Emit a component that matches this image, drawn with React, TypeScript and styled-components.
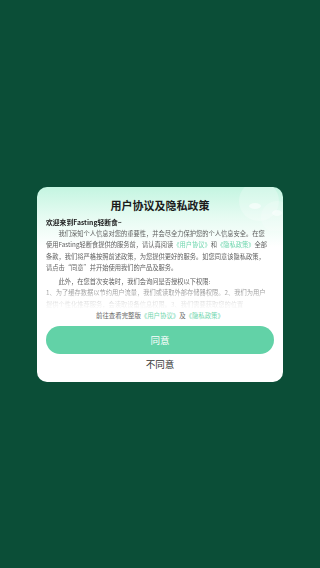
import styled, { createGlobalStyle } from "styled-components";

const GlobalStyle = createGlobalStyle`
  html, body {
    margin: 0;
    padding: 0;
    background: #0b4e37;
  }
  body {
    font-family: "Noto Sans CJK SC", "Noto Sans", sans-serif;
  }
`;

const App = (): JSX.Element => {
  return (
    <>
      <GlobalStyle />
      <Page>
        <Dialog>
          <Bubbles>
            <svg width="60" height="44" viewBox="0 0 60 44">
              <circle cx="36" cy="14" r="20" fill="#ffffff" opacity="0.25" />
              <circle cx="54" cy="30" r="16" fill="#ffffff" opacity="0.2" />
              <ellipse cx="32" cy="19" rx="6" ry="3" fill="#ffffff" opacity="0.55" />
              <ellipse cx="54" cy="26" rx="5" ry="3" fill="#ffffff" opacity="0.5" />
            </svg>
          </Bubbles>
          <Title>用户协议及隐私政策</Title>
          <Scroll>
            <Welcome>欢迎来到Fasting轻断食~</Welcome>
            <Para>
              我们深知个人信息对您的重要性，并会尽全力保护您的个人信息安全。在您
              <br />
              使用Fasting轻断食提供的服务前，请认真阅读<Link>《用户协议》</Link>和<Link>《隐私政策》</Link>全部
              <br />
              条款，我们将严格按照前述政策，为您提供更好的服务。如您同意该隐私政策，
              <br />
              请点击“同意”并开始使用我们的产品及服务。
            </Para>
            <Para $gap>此外，在您首次安装时，我们会询问是否授权以下权限:</Para>
            <Para $flat>
              1、为了缓存数据以节约用户流量，我们或读取外部存储器权限。2、我们为用户
              <br />
              提供个性化推荐服务，会读取设备信息权限。3、我们需要获取您的位置
            </Para>
          </Scroll>
          <Note>
            前往查看完整版<Link>《用户协议》</Link>及<Link>《隐私政策》</Link>
          </Note>
          <AgreeButton>同意</AgreeButton>
          <RejectButton>不同意</RejectButton>
        </Dialog>
      </Page>
    </>
  );
};
export default App;

const Page = styled.div`
  height: 568px;
  display: flex;
  align-items: center;
  justify-content: center;
`;
const Dialog = styled.section`
  position: relative;
  width: 246px;
  box-sizing: border-box;
  padding: 11px 9px 11px;
  border-radius: 10px;
  overflow: hidden;
  background: linear-gradient(180deg, #c4f5e1 0px, #e6fbf2 30px, #ffffff 60px);
  display: flex;
  flex-direction: column;
`;
const Bubbles = styled.div`
  position: absolute;
  top: 0;
  right: 0;
  line-height: 0;
`;
const Title = styled.h2`
  position: relative;
  margin: 0;
  font-size: 11px;
  line-height: 15px;
  font-weight: 700;
  color: #1a1a1a;
  text-align: center;
`;
const Scroll = styled.div`
  margin-top: 4px;
  height: 94px;
  overflow: hidden;
  -webkit-mask-image: linear-gradient(180deg, #000 0px, #000 66px, rgba(0, 0, 0, 0.45) 78px, rgba(0, 0, 0, 0.1) 88px, transparent 94px);
  mask-image: linear-gradient(180deg, #000 0px, #000 66px, rgba(0, 0, 0, 0.45) 78px, rgba(0, 0, 0, 0.1) 88px, transparent 94px);
`;
const Welcome = styled.p`
  margin: 0;
  font-size: 6.8px;
  line-height: 11px;
  font-weight: 700;
  color: #222;
`;
const Para = styled.p<{ $gap?: boolean; $flat?: boolean }>`
  margin: ${(p) => (p.$gap ? "2px" : "0")} 0 0;
  font-size: 6.25px;
  line-height: 11.5px;
  color: #5e5e5e;
  text-indent: ${(p) => (p.$flat ? "0" : "2em")};
  white-space: nowrap;
  overflow: hidden;
`;
const Link = styled.span`
  color: #6fd6ae;
`;
const Note = styled.p`
  margin: 0;
  font-size: 6.4px;
  line-height: 10px;
  color: #666;
  text-align: center;
`;
const AgreeButton = styled.button`
  margin-top: 5px;
  height: 28px;
  border: none;
  border-radius: 14px;
  background: #62d2a7;
  color: #ffffff;
  font-family: inherit;
  font-size: 9.5px;
  padding: 0;
`;
const RejectButton = styled.button`
  margin-top: 3px;
  height: 14px;
  border: none;
  background: none;
  color: #333;
  font-family: inherit;
  font-size: 9.5px;
  line-height: 14px;
  padding: 0;
`;
